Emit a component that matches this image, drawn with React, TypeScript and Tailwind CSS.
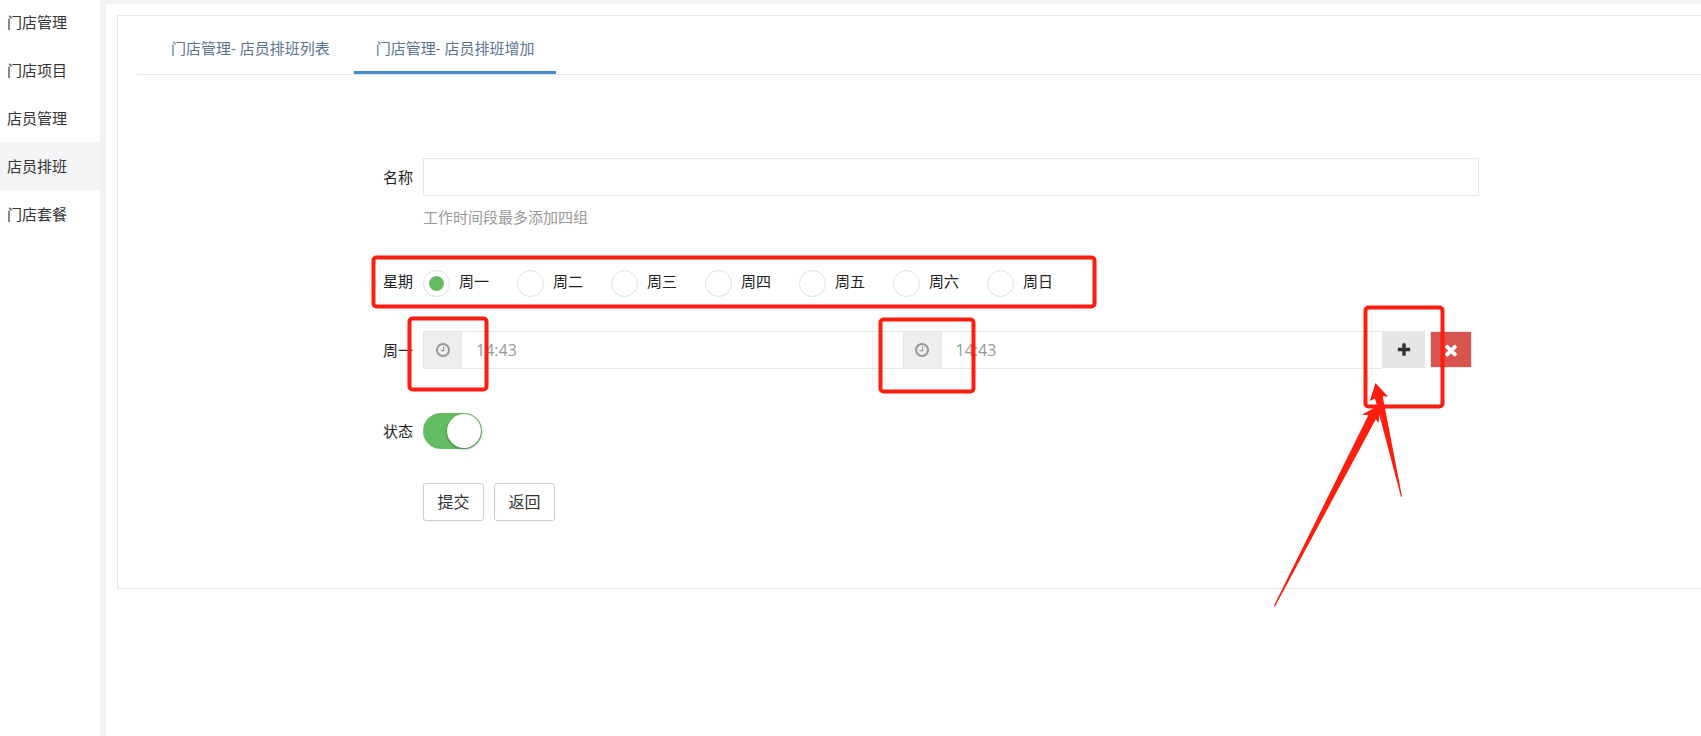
import { useState } from "react";
import type { ReactNode } from "react";

const menus = ["门店管理", "门店项目", "店员管理", "店员排班", "门店套餐"];
const tabs = ["门店管理- 店员排班列表", "门店管理- 店员排班增加"];
const weekdays = ["周一", "周二", "周三", "周四", "周五", "周六", "周日"];

function ClockIcon() {
  return (
    <svg className="w-[14px] h-[14px]" viewBox="0 128 1536 1536" fill="currentColor">
      <path d="M896 544v448q0 14-9 23t-23 9h-320q-14 0-23-9t-9-23v-64q0-14 9-23t23-9h224v-352q0-14 9-23t23-9h64q14 0 23 9t9 23zm416 352q0-148-73-273t-198-198-273-73-273 73-198 198-73 273 73 273 198 198 273 73 273-73 198-198 73-273zm224 0q0 209-103 385.5t-279.5 279.5-385.5 103-385.5-103-279.5-279.5-103-385.5 103-385.5 279.5-279.5 385.5-103 385.5 103 279.5 279.5 103 385.5z" />
    </svg>
  );
}

function PlusIcon() {
  return (
    <svg className="w-4 h-4" viewBox="0 0 1792 1792" fill="currentColor">
      <path d="M1600 736v192q0 40-28 68t-68 28h-416v416q0 40-28 68t-68 28h-192q-40 0-68-28t-28-68v-416h-416q-40 0-68-28t-28-68v-192q0-40 28-68t68-28h416v-416q0-40 28-68t68-28h192q40 0 68 28t28 68v416h416q40 0 68 28t28 68z" />
    </svg>
  );
}

function TimesIcon() {
  return (
    <svg className="w-[18px] h-[18px]" viewBox="0 0 1792 1792" fill="currentColor">
      <path d="M1490 1322q0 40-28 68l-136 136q-28 28-68 28t-68-28l-294-294-294 294q-28 28-68 28t-68-28l-136-136q-28-28-28-68t28-68l294-294-294-294q-28-28-28-68t28-68l136-136q28-28 68-28t68 28l294 294 294-294q28-28 68-28t68 28l136 136q28 28 28 68t-28 68l-294 294 294 294q28 28 28 68z" />
    </svg>
  );
}

function Row({ label, htmlFor, children }: { label: string; htmlFor: string; children: ReactNode }) {
  return (
    <div className="flex items-center">
      <label htmlFor={htmlFor} className="w-[305px] shrink-0 pr-[10px] text-right text-[#222]">
        {label}
      </label>
      <div className="flex-1 flex items-center">{children}</div>
    </div>
  );
}

function TimeField({ id, label }: { id: string; label: string }) {
  return (
    <div className="flex flex-1 h-[38px] border-y border-l border-[#e5e6eb]">
      <span className="w-[38px] shrink-0 flex items-center justify-center bg-[#eee] border-r border-[#e5e6eb] text-[#999]">
        <ClockIcon />
      </span>
      <input
        id={id}
        aria-label={label}
        defaultValue="14:43"
        className="flex-1 min-w-0 px-[14px] text-base text-[#999] outline-none"
      />
    </div>
  );
}

// Red marker boxes and arrows drawn over the form
function Annotations() {
  return (
    <svg
      className="absolute left-0 top-0 pointer-events-none"
      width="1701"
      height="736"
      viewBox="0 0 1701 736"
      fill="none"
    >
      <g stroke="#ff1d10" strokeWidth="4">
        <rect x="373.5" y="257.5" width="721" height="49" rx="3" />
        <rect x="409.5" y="318.5" width="77" height="71" rx="3" />
        <rect x="880.5" y="319.5" width="93" height="72" rx="3" />
        <rect x="1365.5" y="307.5" width="77" height="99" rx="3" />
      </g>
      <g fill="#ff1d10">
        <path d="M1375.5 383L1388 396.5L1382.7 396.3L1402 496.5L1401 497L1375 398.5L1369.7 401Z" />
        <path d="M1381 404L1378.3 423L1375.8 419.3L1275 606.5L1273.8 606L1368.3 415.3L1362 414.7Z" />
      </g>
    </svg>
  );
}

export default function App() {
  const [day, setDay] = useState("周一");
  const [enabled, setEnabled] = useState(true);

  return (
    <div className="relative flex min-h-screen overflow-hidden bg-white text-[15px] leading-6 text-[#333] font-['Open_Sans','Noto_Sans_CJK_SC',sans-serif]">
      {/* Sidebar */}
      <nav className="w-[100px] shrink-0 -mt-0.5">
        {menus.map((item) => (
          <a
            key={item}
            href="#"
            className={`flex items-center h-12 pl-[7px] ${item === "店员排班" ? "bg-[#f4f5f7]" : ""}`}
          >
            {item}
          </a>
        ))}
      </nav>

      <main className="flex-1 min-w-0 border-l-6 border-t-4 border-[#f2f2f2] pl-[11px] pt-[11px]">
        <div className="border-l border-y border-[#e7e7eb] pb-[67px]">
          {/* Tabs */}
          <div className="ml-[19px] h-[59px] flex gap-0.5 pl-3 border-b border-[#e7e7eb]">
            {tabs.map((tab, i) => (
              <a
                key={tab}
                href="#"
                className={`flex items-center px-[22px] pt-2 text-[#5a7391] border-b-3 ${i === 1 ? "border-[#428bca]" : "border-transparent"}`}
              >
                {tab}
              </a>
            ))}
          </div>

          {/* Form */}
          <form className="mt-[83px] mr-[222px]">
            <Row label="名称" htmlFor="name">
              <input id="name" className="w-full h-[38px] px-3 border border-[#e5e6e7] outline-none" />
            </Row>
            <p className="mt-[9px] ml-[305px] text-[#999]">工作时间段最多添加四组</p>

            <div role="radiogroup" aria-labelledby="weekday-label" className="mt-[41px] flex items-start">
              <span id="weekday-label" className="w-[305px] shrink-0 pr-[10px] text-right leading-[22px] text-[#222]">
                星期
              </span>
              {weekdays.map((d) => (
                <label key={d} className="w-[94px] flex items-start gap-[9px] leading-[22px] text-[#222]">
                  <input
                    type="radio"
                    name="weekday"
                    checked={day === d}
                    onChange={() => setDay(d)}
                    className="appearance-none w-[27px] h-[27px] rounded-full border border-[#dfdfdf] bg-white p-[5px] bg-clip-content checked:bg-[#64bd63]"
                  />
                  {d}
                </label>
              ))}
            </div>

            <div className="mt-[34px]">
              <Row label="周一" htmlFor="start">
                <div className="flex-1 flex">
                  <TimeField id="start" label="开始时间" />
                  <TimeField id="end" label="结束时间" />
                </div>
                <div className="flex items-start gap-[5px] h-[38px] pr-[7px]">
                  <button
                    type="button"
                    aria-label="添加"
                    className="w-[43px] h-[37px] flex items-center justify-center bg-[#e6e6e6] text-[#333]"
                  >
                    <PlusIcon />
                  </button>
                  <button
                    type="button"
                    aria-label="删除"
                    className="w-[42px] h-[37px] flex items-center justify-center bg-[#d9534f] border border-[#e5e6e7] text-white"
                  >
                    <TimesIcon />
                  </button>
                </div>
              </Row>
            </div>

            <div className="mt-11">
              <Row label="状态" htmlFor="status">
                <input
                  id="status"
                  type="checkbox"
                  role="switch"
                  checked={enabled}
                  onChange={(e) => setEnabled(e.target.checked)}
                  className="appearance-none w-[59px] h-9 rounded-full p-px bg-[#dfdfdf] checked:bg-[#64bd63] flex checked:justify-end before:block before:w-[34px] before:h-[34px] before:rounded-full before:bg-white before:shadow-[0_1px_3px_rgba(0,0,0,0.4)]"
                />
              </Row>
            </div>

            <div className="mt-[34px] ml-[305px] flex gap-[10px]">
              <button type="submit" className="w-[61px] h-[38px] border border-[#ccc] rounded-[3px] text-base">
                提交
              </button>
              <button type="button" className="w-[61px] h-[38px] border border-[#ccc] rounded-[3px] text-base">
                返回
              </button>
            </div>
          </form>
        </div>
      </main>

      <Annotations />
    </div>
  );
}
